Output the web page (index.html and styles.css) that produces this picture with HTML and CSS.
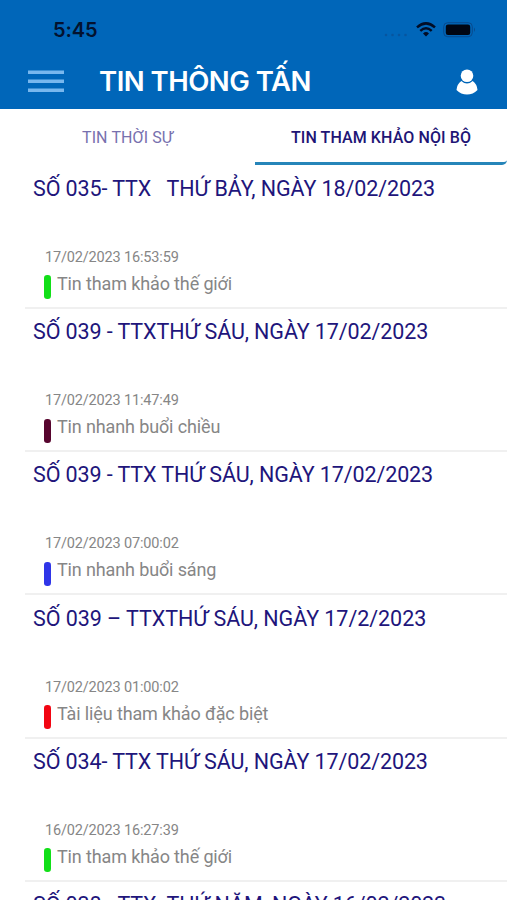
FILE: index.html
```html
<!DOCTYPE html>
<html lang="vi">
<head>
<meta charset="utf-8">
<title>Tin thông tấn</title>
<link rel="stylesheet" href="styles.css">
</head>
<body>
<div class="app">
  <header class="header">
    <div class="status">
      <span class="time">5:45</span>
      <div class="indicators">
        <svg class="signal" width="26" height="4" viewBox="0 0 26 4"><g fill="#07559f"><circle cx="3" cy="2" r="1.3"/><circle cx="9.5" cy="2" r="1.3"/><circle cx="16" cy="2" r="1.3"/><circle cx="22.500" cy="2" r="1.3"/></g></svg>
        <svg class="wifi" width="20" height="15" viewBox="0 0 20 15"><g fill="none" stroke="#020d25" stroke-width="2.5"><path d="M1 5.400Q10 -2.600 19 5.400"/><path d="M4.300 8.800Q10 3.600 15.700 8.800"/></g><path d="M7 11.400Q10 8.800 13 11.400L10 14.500Z" fill="#020d25"/></svg>
        <svg class="battery" width="33" height="16" viewBox="0 0 33 16"><rect x=".7" y=".7" width="28.600" height="14" rx="4" fill="none" stroke="#084a8d"/><rect x="2.800" y="2.500" width="24.400" height="10.500" rx="2.200" fill="#000613"/><path d="M31 5.500Q33 7.700 31 10Z" fill="#084a8d"/></svg>
      </div>
    </div>
    <div class="bar">
      <svg class="menu" width="36" height="23" viewBox="0 0 36 23"><path d="M0 2.200H36M0 11.300H36M0 20.200H36" stroke="#78b7ee" stroke-width="3.600"/></svg>
      <h1>TIN THÔNG TẤN</h1>
      <svg class="user" width="22" height="26" viewBox="0 0 22 26"><path d="M5.300 12Q11 17 16.700 12Q21 15 21.500 21Q17 25.600 11 25.600Q5 25.600 .5 21Q1 15 5.300 12Z" fill="#fff"/><circle cx="11" cy="6.800" r="6.300" fill="#fff"/></svg>
    </div>
  </header>
  <nav class="tabs">
    <a class="tab">TIN THỜI SỰ</a>
    <a class="tab active">TIN THAM KHẢO NỘI BỘ</a>
  </nav>
  <main class="list">
    <article class="item"><h2>SỐ 035- TTX &nbsp; THỨ BẢY, NGÀY 18/02/2023</h2><time>17/02/2023 16:53:59</time><p class="green">Tin tham khảo thế giới</p></article>
    <article class="item"><h2>SỐ 039 - TTXTHỨ SÁU, NGÀY 17/02/2023</h2><time>17/02/2023 11:47:49</time><p class="maroon">Tin nhanh buổi chiều</p></article>
    <article class="item"><h2>SỐ 039 - TTX THỨ SÁU, NGÀY 17/02/2023</h2><time>17/02/2023 07:00:02</time><p class="blue">Tin nhanh buổi sáng</p></article>
    <article class="item"><h2 class="wide">SỐ 039 – TTXTHỨ SÁU, NGÀY 17/2/2023</h2><time>17/02/2023 01:00:02</time><p class="red">Tài liệu tham khảo đặc biệt</p></article>
    <article class="item"><h2>SỐ 034- TTX THỨ SÁU, NGÀY 17/02/2023</h2><time>16/02/2023 16:27:39</time><p class="green">Tin tham khảo thế giới</p></article>
    <article class="item"><h2>SỐ 038 - TTX&nbsp; THỨ NĂM, NGÀY 16/02/2023</h2></article>
  </main>
</div>
</body>
</html>
```
FILE: styles.css
```css
* { box-sizing: border-box; }
body { margin: 0; background: #fff; font-family: Roboto, "Liberation Sans", sans-serif; }
.app { height: 900px; overflow: hidden; }
.header { height: 108.500px; background: #0066b9; }
.status { height: 56px; display: flex; justify-content: space-between; padding: 20px 31px 0 53px; }
.time { font: 600 20px/20px Inter, sans-serif; letter-spacing: -.1px; color: #03122f; }
.indicators { display: flex; align-items: flex-start; }
.signal { margin: 13px 7px 0 0; }
.wifi { margin: 2px 7px 0 0; }
.battery { margin-top: 2px; }
.bar { height: 52px; display: flex; align-items: flex-start; padding: 0 28px; }
.menu { margin-top: 14px; }
h1 { flex: 1; margin: 7px 0 0 35px; font: 600 27.500px/36px Inter, sans-serif; letter-spacing: -.5px; color: #fff; white-space: nowrap; }
.user { margin: 13px 1px 0 0; }
.tabs { height: 57px; display: grid; grid-template-columns: 255px 252px; }
.tab { height: 57px; padding-top: 1px; text-align: center; font-size: 16px; line-height: 56px; letter-spacing: .1px; color: #7770ae; }
.active { height: 56.500px; font-weight: 500; color: #211575; border-bottom: 3px solid #2685b9; border-bottom-right-radius: 5px; }
.item { height: 143.250px; margin-left: 25px; border-bottom: 2px solid #f0f0f0; }
h2 { margin: 0; padding: 9.300px 0 0 8px; font-weight: 400; font-size: 21.500px; line-height: 28px; letter-spacing: -.1px; color: #21157b; white-space: nowrap; }
.wide { letter-spacing: -.05px; }
time { display: block; margin: 45px 0 0 20px; font-size: 14.500px; line-height: 19px; letter-spacing: -.16px; color: #868686; }
p { display: flex; margin: 5px 0 0 19px; font-size: 18px; line-height: 24px; letter-spacing: -.13px; color: #868686; }
p::before { content: ""; width: 6.500px; height: 24px; margin: 3.500px 6.500px -3.500px 0; border-radius: 3.200px; }
.green::before { background: #12df18; }
.maroon::before { background: #57052e; }
.blue::before { background: #2f35e8; }
.red::before { background: #f20512; }
```
